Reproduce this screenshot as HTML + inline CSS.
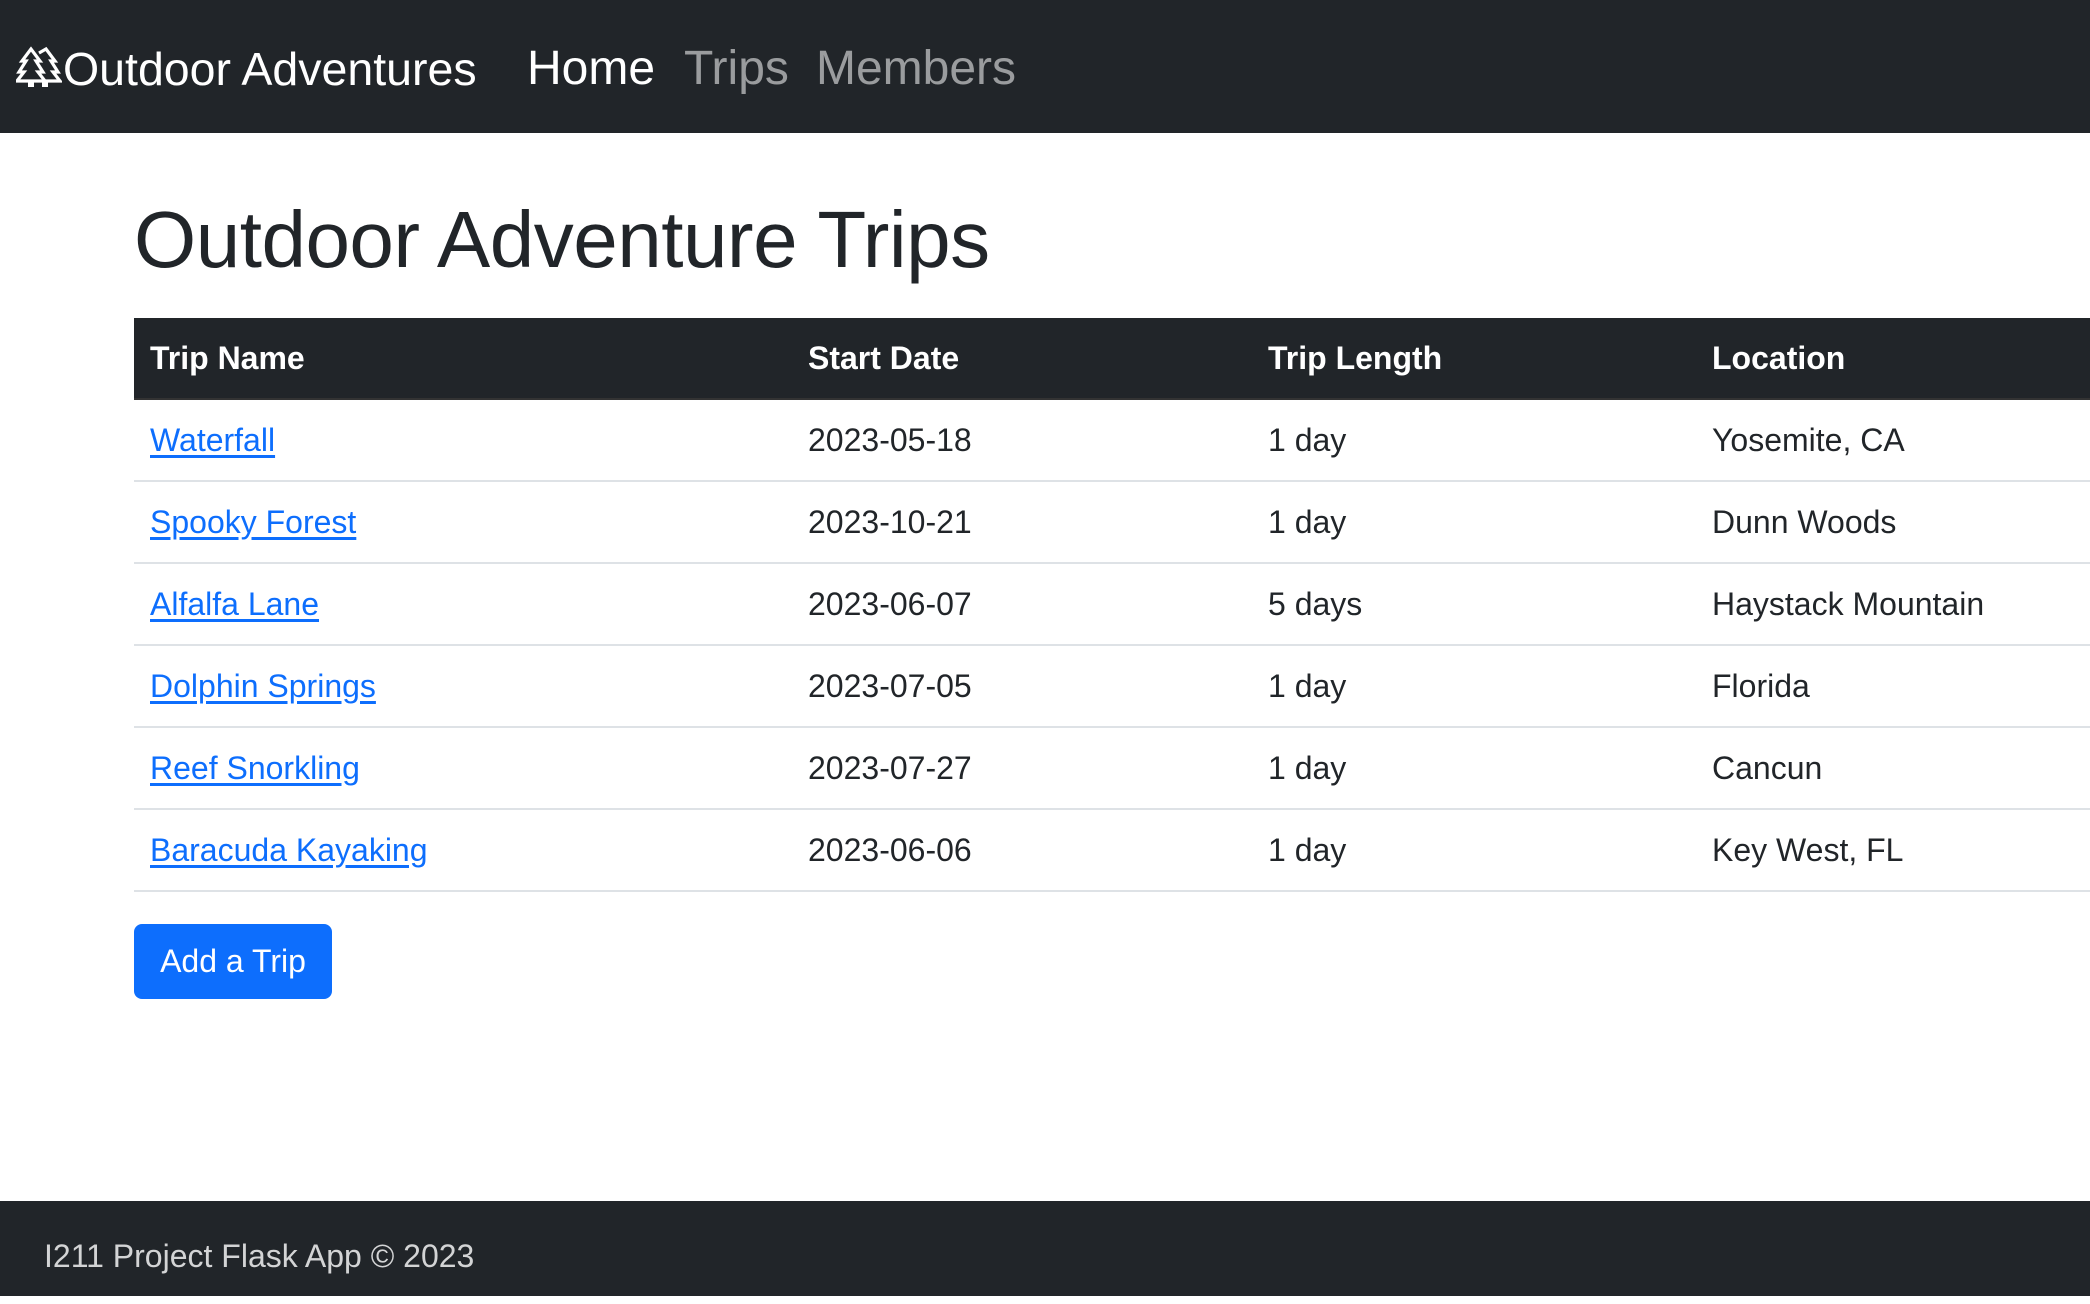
<!DOCTYPE html>
<html><head><meta charset="utf-8"><style>
*{box-sizing:border-box;margin:0;padding:0}
body{width:2090px;height:1296px;overflow:hidden;background:#fff;font-family:"Liberation Sans",Arial,sans-serif;color:#212529;position:relative}
nav{position:absolute;left:0;top:0;width:2090px;height:133px;background:#212529}
nav span{position:absolute;top:41px;font-size:48px;line-height:56px;white-space:nowrap}
nav svg{position:absolute;left:16px;top:46px}
h1{position:absolute;left:134px;top:192px;font-size:80px;font-weight:500;line-height:96px;letter-spacing:-0.5px}
table{position:absolute;left:134px;top:318px;width:2100px;border-collapse:collapse;font-size:32px}
th,td{text-align:left;padding:0 16px;height:82px;border-bottom:2px solid #dee2e6;white-space:nowrap}
th{background:#212529;color:#fff;height:81px;border-bottom:2px solid #333}
td a{color:#0d6efd;text-decoration:underline;text-underline-offset:4px}
.btn{position:absolute;left:134px;top:924px;width:198px;height:75px;background:#0d6efd;color:#fff;border-radius:8px;font-size:32px;line-height:75px;text-align:center}
footer{position:absolute;left:0;top:1201px;width:2090px;height:95px;background:#212529;color:#d3d4d5;font-size:32px;line-height:95px;padding-left:44px;padding-top:8px}
</style></head><body>
<nav>
<svg width="46" height="41" viewBox="0 0 46 41" fill="none" stroke="#fff" stroke-width="3.2" stroke-linejoin="miter">
<path d="M15 3 L6 15 H10 L3 26 H8 L1 35 H29 L22 26 H27 L20 15 H24 Z"/>
<path d="M23 7 L30 3 L39 15 H35 L42 26 H37 L44 35 H29"/>
<rect x="12" y="35" width="6" height="6" fill="#fff" stroke="none"/>
<rect x="26" y="35" width="6" height="6" fill="#fff" stroke="none"/>
</svg>
<span style="left:63px;color:#fff;font-size:46.5px">Outdoor Adventures</span>
<span style="left:527px;color:#fff">Home</span>
<span style="left:684px;color:rgba(255,255,255,.55)">Trips</span>
<span style="left:816px;color:rgba(255,255,255,.55)">Members</span>
</nav>
<h1>Outdoor Adventure Trips</h1>
<table>
<colgroup><col style="width:658px"><col style="width:460px"><col style="width:444px"><col></colgroup>
<tr><th>Trip Name</th><th>Start Date</th><th>Trip Length</th><th>Location</th></tr>
<tr><td><a>Waterfall</a></td><td>2023-05-18</td><td>1 day</td><td>Yosemite, CA</td></tr>
<tr><td><a>Spooky Forest</a></td><td>2023-10-21</td><td>1 day</td><td>Dunn Woods</td></tr>
<tr><td><a>Alfalfa Lane</a></td><td>2023-06-07</td><td>5 days</td><td>Haystack Mountain</td></tr>
<tr><td><a>Dolphin Springs</a></td><td>2023-07-05</td><td>1 day</td><td>Florida</td></tr>
<tr><td><a>Reef Snorkling</a></td><td>2023-07-27</td><td>1 day</td><td>Cancun</td></tr>
<tr><td><a>Baracuda Kayaking</a></td><td>2023-06-06</td><td>1 day</td><td>Key West, FL</td></tr>
</table>
<div class="btn">Add a Trip</div>
<footer>I211 Project Flask App © 2023</footer>
</body></html>
